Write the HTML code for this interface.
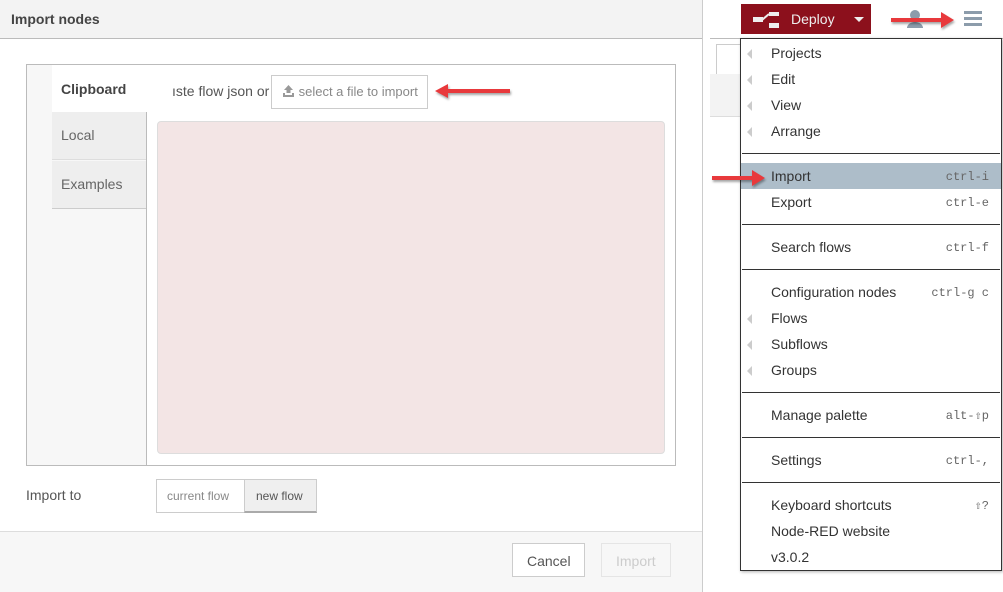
<!DOCTYPE html>
<html><head><meta charset="utf-8"><style>
*{box-sizing:border-box;margin:0;padding:0}
body{width:1003px;height:592px;position:relative;overflow:hidden;background:#fff;font-family:"Liberation Sans",sans-serif;font-size:14px;color:#555}
.a{position:absolute}
.mi{position:absolute;left:771px;font-size:14px;color:#333;line-height:16px}
.sc{position:absolute;right:12px;font-family:"Liberation Mono",monospace;font-size:12px;color:#666;line-height:16px}
.sep{position:absolute;left:1px;right:1px;height:1px;background:#333}
.car{position:absolute;left:6px;width:0;height:0;border-top:5px solid transparent;border-bottom:5px solid transparent;border-right:5px solid #ccc}
.arr{filter:drop-shadow(1px 2px 1px rgba(0,0,0,.35))}
</style></head><body>
<div class="a" style="left:0;top:0;width:703px;height:592px;border-right:1px solid #ccc;background:#fff"></div>
<div class="a" style="left:0;top:0;width:702px;height:39px;background:#f3f3f3;border-bottom:1px solid #bbb"></div>
<div class="a" style="left:11px;top:11px;font-weight:bold;font-size:14px;color:#444">Import nodes</div>
<div class="a" style="left:26px;top:64px;width:650px;height:402px;border:1px solid #bbb;background:#fff"></div>
<div class="a" style="left:27px;top:65px;width:120px;height:400px;background:#f7f7f7;border-right:1px solid #bbb"></div>
<div class="a" style="left:52px;top:65px;width:96px;height:47px;background:#fff;font-weight:bold;color:#444;padding:16px 0 0 9px;line-height:16px">Clipboard</div>
<div class="a" style="left:52px;top:112px;width:94px;height:48px;background:#eee;border-bottom:1px solid #ddd;padding:15px 0 0 9px;color:#666;line-height:16px">Local</div>
<div class="a" style="left:52px;top:161px;width:94px;height:48px;background:#eee;border-bottom:1px solid #ccc;padding:15px 0 0 9px;color:#666;line-height:16px">Examples</div>
<div class="a" style="left:172px;top:83px;color:#555">ıste flow json or</div>
<div class="a" style="left:271px;top:75px;width:157px;height:34px;border:1px solid #ccc;background:#fff;color:#888;font-size:13px;padding:8px 0 0 10px">
<svg width="13" height="12" viewBox="0 0 13 12" style="vertical-align:-1px"><path d="M6.5 0L11 5H8.5V8H4.5V5H2Z M1 8h2v2h7V8h2v4H1Z" fill="#999"/></svg> select a file to import</div>
<svg class="a arr" style="left:433px;top:82px" width="82" height="20"><path d="M2 9L15 2V7H77V11H15V16Z" fill="#e8393c"/></svg>
<div class="a" style="left:157px;top:121px;width:508px;height:333px;background:#f3e5e5;border:1px solid #ddd;border-radius:4px"></div>
<div class="a" style="left:26px;top:487px;color:#555">Import to</div>
<div class="a" style="left:156px;top:479px;width:89px;height:34px;border:1px solid #ccc;border-right:none;color:#888;font-size:12px;padding:9px 0 0 10px;background:#fff">current flow</div>
<div class="a" style="left:244px;top:479px;width:73px;height:34px;border:1px solid #ccc;border-bottom:2px solid #aaa;background:#efefef;color:#555;font-size:12px;padding:9px 0 0 11px">new flow</div>
<div class="a" style="left:0;top:531px;width:702px;height:61px;background:#f7f7f7;border-top:1px solid #ddd"></div>
<div class="a" style="left:512px;top:543px;width:73px;height:34px;border:1px solid #ccc;background:#fff;color:#555;padding:9px 0 0 14px">Cancel</div>
<div class="a" style="left:601px;top:543px;width:70px;height:34px;border:1px solid #e5e5e5;background:#f7f7f7;color:#ccc;padding:9px 0 0 14px">Import</div>
<div class="a" style="left:710px;top:38px;width:293px;height:1px;background:#bbb"></div>
<div class="a" style="left:716px;top:44px;width:30px;height:30px;border:1px solid #ccc;border-bottom:none;background:#fff"></div>
<div class="a" style="left:710px;top:74px;width:40px;height:43px;background:#f3f3f3;border-bottom:1px solid #ddd"></div>
<div class="a" style="left:741px;top:4px;width:130px;height:30px;background:#8c101c"></div>
<svg class="a" style="left:752px;top:11px" width="30" height="18"><rect x="1" y="6" width="10" height="5" fill="#eee"/><path d="M10 9L17 3" stroke="#eee" stroke-width="2"/><rect x="17" y="1" width="10" height="4" fill="#eee"/><rect x="17" y="12" width="10" height="5" fill="#eee"/></svg>
<div class="a" style="left:791px;top:11px;color:#eee;font-size:14px">Deploy</div>
<div class="a" style="left:854px;top:17px;border-left:5px solid transparent;border-right:5px solid transparent;border-top:5px solid #eee"></div>
<svg class="a" style="left:905px;top:9px" width="20" height="20"><circle cx="10" cy="6" r="5" fill="#8c9cab"/><path d="M2 19a8 6 0 0 1 16 0Z" fill="#8c9cab"/></svg>
<svg class="a arr" style="left:889px;top:10px" width="68" height="20"><path d="M2 8H52V2L65 10L52 18V12H2Z" fill="#e8393c"/></svg>
<div class="a" style="left:964px;top:11px;width:18px;height:3px;background:#8c9cab;box-shadow:0 6px 0 #8c9cab,0 12px 0 #8c9cab"></div>
<div class="a" style="left:740px;top:38px;width:262px;height:533px;border:1px solid #333;background:#fff;box-shadow:1px 1px 3px rgba(0,0,0,.3)">
<div class="car" style="top:10px"></div><div class="car" style="top:36px"></div><div class="car" style="top:62px"></div><div class="car" style="top:88px"></div>
<div class="sep" style="top:114px"></div>
<div class="a" style="left:0;right:0;top:124px;height:26px;background:#adbdc9"></div>
<div class="sep" style="top:185px"></div><div class="sep" style="top:230px"></div>
<div class="car" style="top:275px"></div><div class="car" style="top:301px"></div><div class="car" style="top:327px"></div>
<div class="sep" style="top:353px"></div><div class="sep" style="top:398px"></div><div class="sep" style="top:443px"></div>
<div class="sc" style="top:130px">ctrl-i</div>
<div class="sc" style="top:156px">ctrl-e</div>
<div class="sc" style="top:201px">ctrl-f</div>
<div class="sc" style="top:246px">ctrl-g c</div>
<div class="sc" style="top:369px">alt-⇧p</div>
<div class="sc" style="top:414px">ctrl-,</div>
<div class="sc" style="top:459px">⇧?</div>
</div>
<div class="mi" style="top:45px">Projects</div>
<div class="mi" style="top:71px">Edit</div>
<div class="mi" style="top:97px">View</div>
<div class="mi" style="top:123px">Arrange</div>
<div class="mi" style="top:168px">Import</div>
<div class="mi" style="top:194px">Export</div>
<div class="mi" style="top:239px">Search flows</div>
<div class="mi" style="top:284px">Configuration nodes</div>
<div class="mi" style="top:310px">Flows</div>
<div class="mi" style="top:336px">Subflows</div>
<div class="mi" style="top:362px">Groups</div>
<div class="mi" style="top:407px">Manage palette</div>
<div class="mi" style="top:452px">Settings</div>
<div class="mi" style="top:497px">Keyboard shortcuts</div>
<div class="mi" style="top:523px">Node-RED website</div>
<div class="mi" style="top:549px">v3.0.2</div>
<svg class="a arr" style="left:710px;top:168px" width="58" height="20"><path d="M2 8H42V2L55 10L42 18V12H2Z" fill="#e8393c"/></svg>
</body></html>
